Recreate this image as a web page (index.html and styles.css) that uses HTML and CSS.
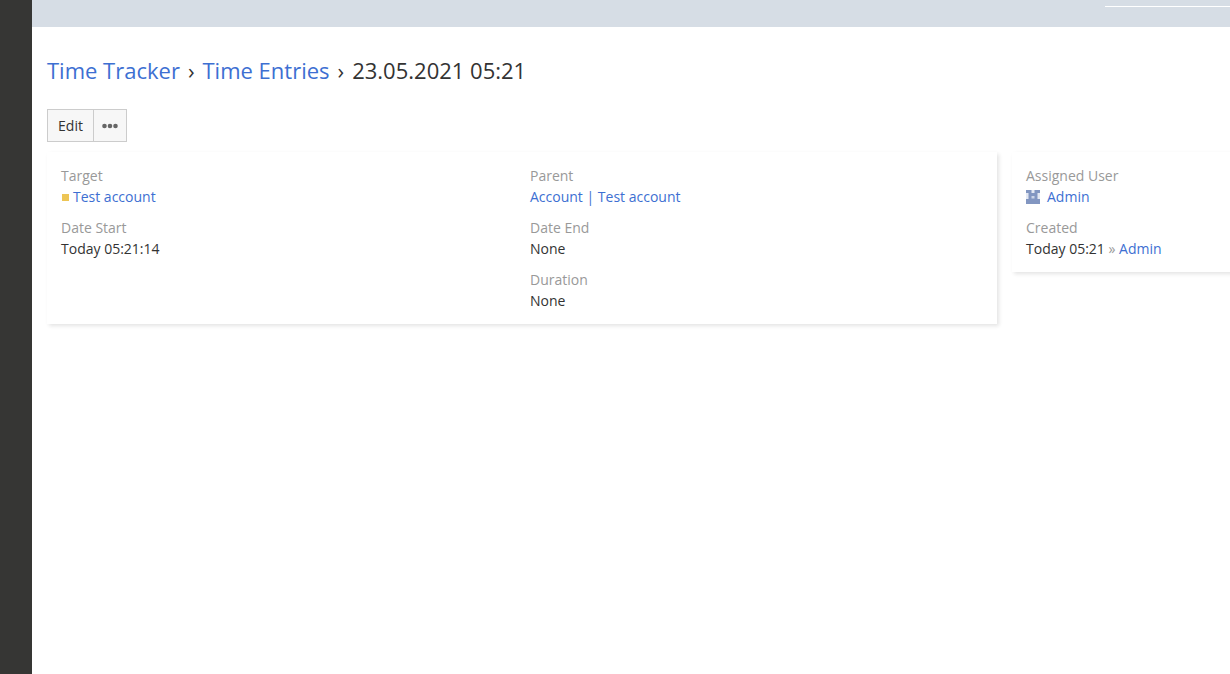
FILE: index.html
```html
<!DOCTYPE html>
<html lang="en"><head><meta charset="utf-8"><title>Time Entry</title><link rel="stylesheet" href="styles.css"></head>
<body>
<aside class="sidebar"></aside>
<div class="page">
<header class="navbar"><div class="search-line"></div></header>
<main class="content">
<h3 class="title"><a>Time Tracker</a><span class="sep">›</span><a>Time Entries</a><span class="sep">›</span><span>23.05.2021 05:21</span></h3>
<div class="buttons"><button class="btn">Edit</button><button class="btn more" aria-label="More"><svg width="16" height="6" viewBox="0 0 16 6"><circle cx="2.5" cy="3" r="2.3"/><circle cx="8" cy="3" r="2.3"/><circle cx="13.5" cy="3" r="2.3"/></svg></button></div>
<div class="record">
<section class="panel main-panel">
<div class="col">
<div class="field"><label>Target</label><div><i class="dot"></i><a>Test account</a></div></div>
<div class="field"><label>Date Start</label><div>Today 05:21:14</div></div>
</div>
<div class="col">
<div class="field"><label>Parent</label><div><a>Account | Test account</a></div></div>
<div class="field"><label>Date End</label><div>None</div></div>
<div class="field"><label>Duration</label><div>None</div></div>
</div>
</section>
<section class="panel side-panel">
<div class="field"><label>Assigned User</label><div class="user"><svg class="avatar" width="14" height="14" viewBox="0 0 14 14"><path fill="#8296c1" d="M0 0h14v14H0z"/><path fill="#e3e8f3" d="M0 3h2.5v6H0zM11.5 3H14v6h-2.5zM5.5 0h3v3h-3z"/><path fill="#ccd5e8" d="M5.5 6h3v2.5h-3z"/></svg><a>Admin</a></div></div>
<div class="field"><label>Created</label><div>Today 05:21 <span class="muted">»</span> <a>Admin</a></div></div>
</section>
</div>
</main>
</div>
</body></html>
```
FILE: styles.css
```css
* { box-sizing: border-box; }
body { margin: 0; height: 674px; display: flex; overflow: hidden; background: #fff; color: #333; font: 14px/20px "Open Sans", sans-serif; }
a { color: #3d6fd2; }
.sidebar { width: 32px; flex: none; background: #363634; }
.page { flex: 1; min-width: 0; }
.navbar { height: 27px; background: #d6dde5; display: flex; justify-content: flex-end; }
.search-line { width: 125px; height: 7px; border-bottom: 1px solid #fff; }
.content { padding: 30px 0 0 15px; }
.title { margin: 0; font-size: 22px; line-height: 26px; font-weight: 400; white-space: nowrap; }
.sep { margin: 0 8px; }
.buttons { display: flex; margin-top: 26px; }
.btn { height: 33px; width: 47px; padding: 0; border: 1px solid #ccc; background: #f7f7f7; color: #333; font: inherit; }
.more { width: 34px; margin-left: -1px; display: flex; align-items: center; justify-content: center; fill: #666; }
.record { display: flex; gap: 15px; margin-top: 10px; align-items: flex-start; }
.panel { flex: none; background: #fff; box-shadow: 2px 2px 4px rgba(0,0,0,.11); padding: 14px 14px 2px; }
.main-panel { width: 950px; height: 172px; display: flex; }
.side-panel { width: 250px; height: 120px; }
.col { width: 469px; flex: none; }
.field { height: 52px; }
.field label { display: block; height: 21px; color: #999; }
.dot { display: inline-block; width: 7px; height: 7px; margin: 0 4px 0 1px; vertical-align: 1px; background: #edc555; }
.user { display: flex; align-items: center; gap: 7px; }
.avatar { flex: none; }
.muted { color: #999; }
```
